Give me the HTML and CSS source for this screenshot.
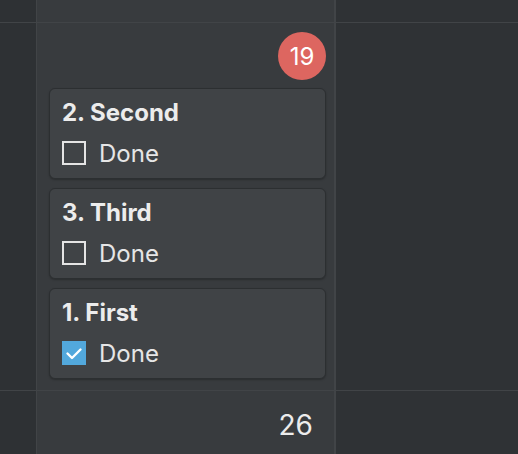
FILE: index.html
```html
<!DOCTYPE html>
<html lang="en">
<head>
    <meta charset="UTF-8">
    <meta name="viewport" content="width=device-width, initial-scale=1.0">
    <title>Calendar week</title>
    <link rel="stylesheet" href="styles.css">
</head>
<body>
    <div class="calendar">
        <div class="cell side"></div>
        <div class="cell day"></div>
        <div class="cell other"></div>

        <div class="cell side"></div>
        <div class="cell day">
            <div class="day-head">
                <span class="badge">19</span>
            </div>
            <div class="cards">
                <div class="card">
                    <div class="card-title">2. Second</div>
                    <label class="check">
                        <span class="box"></span>
                        <span>Done</span>
                    </label>
                </div>
                <div class="card">
                    <div class="card-title">3. Third</div>
                    <label class="check">
                        <span class="box"></span>
                        <span>Done</span>
                    </label>
                </div>
                <div class="card">
                    <div class="card-title">1. First</div>
                    <label class="check">
                        <span class="box checked">
                            <svg viewBox="0 0 24 24" width="24" height="24">
                                <path d="M5.5 12.5l4.5 4.5 8.5-8.5" fill="none" stroke="#fff" stroke-width="2.4" stroke-linecap="round" stroke-linejoin="round"/>
                            </svg>
                        </span>
                        <span>Done</span>
                    </label>
                </div>
            </div>
        </div>
        <div class="cell other"></div>

        <div class="cell side"></div>
        <div class="cell day">
            <div class="day-num">26</div>
        </div>
        <div class="cell other"></div>
    </div>
</body>
</html>
```

FILE: styles.css
```css
html, body {
    margin: 0;
    height: 100%;
}

body {
    font-family: Inter, "Noto Sans", sans-serif;
    background-color: #2e3134;
    color: #e6e6e6;
    overflow: hidden;
}

.calendar {
    display: grid;
    grid-template-columns: 36px 297px 1fr;
    grid-template-rows: 22px 367px 1fr;
    gap: 1px;
    height: 100%;
    background-color: #414447;
}

.cell.side {
    background-color: #2e3134;
}

.cell.day {
    background-color: #383b3e;
}

.cell.other {
    background-color: #2f3235;
    border-left: 1px solid #414447;
}

.day-head {
    display: flex;
    justify-content: flex-end;
    padding: 9px 8px 8px 0;
}

.badge {
    width: 48px;
    height: 48px;
    border-radius: 50%;
    background-color: #dd6660;
    color: #fff;
    font-size: 24px;
    display: flex;
    align-items: center;
    justify-content: center;
}

.cards {
    display: flex;
    flex-direction: column;
    gap: 9px;
    padding: 0 8px 0 12px;
}

.card {
    background-color: #404346;
    border: 1px solid #2c2f31;
    border-radius: 6px;
    padding: 9px 12px 10px;
    box-shadow: 0 1px 2px rgba(0,0,0,0.25);
}

.card-title {
    font-size: 24px;
    font-weight: 700;
    line-height: 30px;
    color: #ececec;
    margin-bottom: 10px;
}

.check {
    display: flex;
    align-items: center;
    gap: 13px;
    height: 30px;
    font-size: 24px;
    color: #e6e6e6;
}

.box {
    width: 24px;
    height: 24px;
    box-sizing: border-box;
    border: 2px solid #e4e4e4;
    flex-shrink: 0;
}

.box.checked {
    border: none;
    background-color: #52a8dc;
}

.box svg {
    display: block;
}

.day-num {
    text-align: right;
    font-size: 28px;
    line-height: 34px;
    padding: 17px 21px 0 0;
    color: #ececec;
}
```
